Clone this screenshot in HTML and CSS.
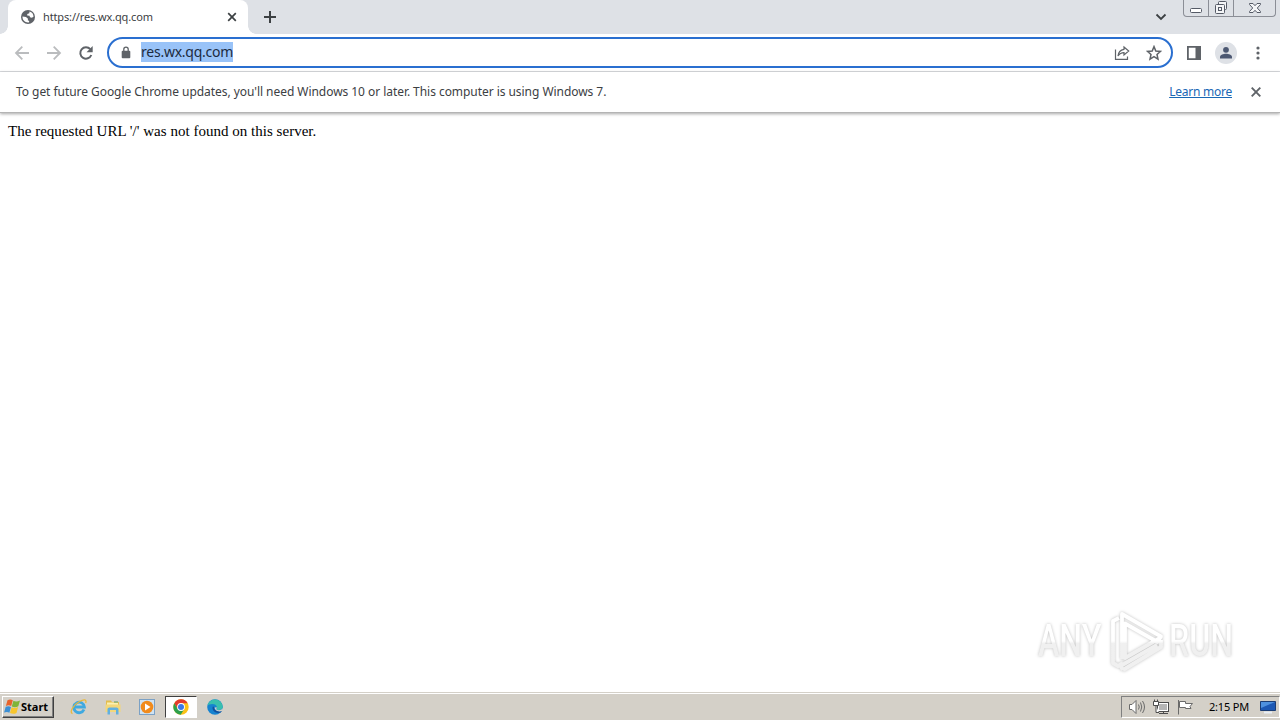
FILE: index.html
```html
<!DOCTYPE html>
<html lang="en">
<head>
  <meta charset="UTF-8">
  <meta name="viewport" content="width=device-width, initial-scale=1.0">
  <title>https://res.wx.qq.com</title>
  <link rel="stylesheet" href="styles.css">
</head>
<body>

  <!-- Tab strip -->
  <header class="tab-strip">
    <div class="tab-before"></div>
    <div class="tab">
      <svg class="globe" width="16" height="16" viewBox="0 0 16 16">
        <circle cx="8" cy="8" r="7" fill="#5f6368"/>
        <path d="M9.500 2.500C12 3 13.600 5.200 13.500 7.800L11.800 8.800 10 8.300 9.500 6.800 7.200 6.600 7.300 5 9.300 4.300zM2.500 7.500L6 8 8 9.800 7.800 11.200 9.300 12 8.800 13.400C5.500 13.800 2.300 11.500 2.500 7.500z" fill="#fff"/>
      </svg>
      <span class="tab-title">https://res.wx.qq.com</span>
      <svg class="tab-close" width="10" height="10" viewBox="0 0 10 10">
        <path d="M1.200 1.200L8.800 8.800M8.800 1.200L1.200 8.800" stroke="#3c4043" stroke-width="1.700"/>
      </svg>
    </div>
    <svg class="new-tab" width="14" height="14" viewBox="0 0 14 14">
      <path d="M7 1V13M1 7H13" stroke="#3c4043" stroke-width="2"/>
    </svg>
    <svg class="tab-search" width="12" height="8" viewBox="0 0 12 8">
      <path d="M1.500 1.500L6 6 10.500 1.500" fill="none" stroke="#3c4043" stroke-width="1.800"/>
    </svg>
    <div class="window-buttons">
      <span class="minimize">
        <svg width="14" height="14" viewBox="0 0 14 14"><rect x="1.500" y="7.500" width="11" height="4" rx="1" fill="#fff" stroke="#555a66"/></svg>
      </span>
      <span class="restore">
        <svg width="14" height="14" viewBox="0 0 14 14" fill="#f4f5f7" stroke="#555a66"><rect x="4.500" y="0.500" width="8" height="8" rx="1"/><rect x="1.500" y="3.500" width="9" height="9" rx="1"/><rect x="4.500" y="6.500" width="3" height="3"/></svg>
      </span>
      <span class="close">
        <svg width="14" height="14" viewBox="0 0 14 14"><path d="M1.500 2.500H5L7 4.700 9 2.500H12.500V3.500L9.300 7 12.500 10.500V11.500H9L7 9.300 5 11.500H1.500V10.500L4.700 7 1.500 3.500z" fill="#f4f5f7" stroke="#555a66"/></svg>
      </span>
    </div>
  </header>

  <!-- Toolbar -->
  <div class="toolbar">
    <svg class="nav back" width="16" height="16" viewBox="0 0 16 16"><path d="M15 8H2.500M8.300 1.700L2 8 8.300 14.300" fill="none" stroke="#babcbe" stroke-width="1.800"/></svg>
    <svg class="nav forward" width="16" height="16" viewBox="0 0 16 16"><path d="M1 8H13.500M7.700 1.700L14 8 7.700 14.300" fill="none" stroke="#babcbe" stroke-width="1.800"/></svg>
    <svg class="nav reload" width="16" height="16" viewBox="0 0 16 16"><path d="M13.300 10A5.700 5.700 0 1 1 12.300 4.200" fill="none" stroke="#5f6368" stroke-width="2"/><path d="M14.700 1V7.200H8.500z" fill="#5f6368"/></svg>
    <div class="omnibox">
      <svg class="lock" width="10" height="13" viewBox="0 0 10 13"><path d="M2.800 6V3.300A2.200 2.200 0 0 1 7.200 3.300V6" fill="none" stroke="#5f6368" stroke-width="1.300"/><rect x="0.700" y="4.700" width="8.600" height="7.500" rx="1" fill="#5f6368"/></svg>
      <span class="url">res.wx.qq.com</span>
      <svg class="share" width="16" height="16" viewBox="0 0 16 16" fill="none" stroke="#5f6368" stroke-width="1.200"><path d="M1.500 4.500V14.400H13.500V11.500"/><path d="M10 2L14.700 6 10 10V7.700C7.200 7.700 5.500 8.700 4 11 4.300 7.500 6.500 4.800 10 4.300z"/></svg>
      <svg class="star" width="16" height="16" viewBox="0 0 16 16"><path d="M8 1.600L9.800 6 14.500 6.400 11 9.500 12 14.100 8 11.700 4 14.100 5 9.500 1.500 6.400 6.200 6z" fill="none" stroke="#5f6368" stroke-width="1.500"/></svg>
    </div>
    <svg class="side-panel" width="14" height="14" viewBox="0 0 14 14"><path d="M0 0H14V14H0zM1.800 1.800V12.200H8.500V1.800z" fill="#5f6368" fill-rule="evenodd"/></svg>
    <svg class="profile" width="22" height="22" viewBox="0 0 22 22"><circle cx="11" cy="11" r="11" fill="#dee1e6"/><circle cx="11" cy="7.800" r="2.900" fill="#4c5872"/><path d="M5 16.500V15C5 12.900 8.500 11.800 11 11.800S17 12.900 17 15V16.500z" fill="#4c5872"/></svg>
    <svg class="menu" width="4" height="14" viewBox="0 0 4 14" fill="#5f6368"><circle cx="2" cy="2" r="1.600"/><circle cx="2" cy="7" r="1.600"/><circle cx="2" cy="12" r="1.600"/></svg>
  </div>

  <!-- Update notice -->
  <div class="infobar">
    <p>To get future Google Chrome updates, you'll need Windows 10 or later. This computer is using Windows 7.</p>
    <a href="#">Learn more</a>
    <svg width="10" height="10" viewBox="0 0 10 10"><path d="M0.700 0.700L9.300 9.300M9.300 0.700L0.700 9.300" stroke="#5f6368" stroke-width="1.900"/></svg>
  </div>

  <main class="page">
    <p>The requested URL '/' was not found on this server.</p>
    <div class="watermark">
      <span class="any">ANY</span>
      <svg width="58" height="64" viewBox="0 0 58 64" fill="none" stroke-linejoin="round">
        <defs>
          <linearGradient id="fade" gradientUnits="userSpaceOnUse" x1="0" y1="0" x2="0" y2="64">
            <stop offset="0.500" stop-color="#fff"/>
            <stop offset="0.540" stop-color="#f0f0f0"/>
          </linearGradient>
        </defs>
        <path d="M12 9L6 12V54L11 57L16 54M15 50V5L54 27.500L50.500 33L18 14.500V49L53 29M16 61L54 38V31M16 61L13.500 57L50 36" stroke="url(#fade)" stroke-width="3.800"/>
      </svg>
      <span class="run">RUN</span>
    </div>
  </main>

  <!-- Taskbar -->
  <footer class="taskbar">
    <div class="start">
      <svg width="17" height="16" viewBox="0 0 17 16">
        <path d="M3.500 1.200C5.500 0 7.300 0.300 8.800 1.300L7.200 7.100C5.700 6.100 3.900 6 1.900 7z" fill="#e8632b"/>
        <path d="M9.400 1.700C11.200 2.700 13.400 2.700 16 1.500L14.300 7.300C12 8.500 9.700 8.400 7.800 7.400z" fill="#7fb438"/>
        <path d="M1.700 7.800C3.600 6.800 5.500 7 7 7.900L5.400 13.700C3.900 12.700 2 12.600 0.100 13.600z" fill="#3c8fd4"/>
        <path d="M7.600 8.300C9.500 9.200 11.700 9.300 14.100 8.100L12.500 14C10.200 15.200 8 15 6 14z" fill="#f7c52d"/>
      </svg>
      <span>Start</span>
    </div>
    <div class="quick-launch">
      <span class="app">
        <svg width="18" height="18" viewBox="0 0 18 18" fill="none"><path d="M14 11.500A5.300 5.300 0 1 1 14.400 9H5" stroke="#3fa9e0" stroke-width="2.800"/><path d="M2.500 15.700C-1 14.500 3 7 9.500 3.500 14 1 17 1.300 15.700 5" stroke="#e9b83b" stroke-width="1.300"/></svg>
      </span>
      <span class="app">
        <svg width="18" height="18" viewBox="0 0 18 18"><path d="M2 2.500H7L8 4H15V13H2z" fill="#e3bd4e"/><path d="M3 4.500H14V12H3z" fill="#fbf0b0"/><path d="M1.500 6.500H16.500V14H1.500z" fill="#f3d77a"/><path d="M3.500 16.500V11Q3.500 9.500 5.500 9.500H12.500Q14.500 9.500 14.500 11V16.500H12V12H6V16.500z" fill="#62b0df"/><path d="M10 4H14" stroke="#5d9b64"/></svg>
      </span>
      <span class="app">
        <svg width="18" height="18" viewBox="0 0 18 18"><rect x="1.500" y="1.500" width="15" height="15" fill="#cfe3f3" stroke="#7ba1c5"/><circle cx="9" cy="9" r="6.300" fill="#f18b1c"/><path d="M7 5.500L12.500 9 7 12.500z" fill="#fff"/></svg>
      </span>
      <span class="app active">
        <svg width="16" height="16" viewBox="0 0 16 16"><circle cx="8" cy="8" r="7.700" fill="#fbc116"/><path d="M1.300 4.200A7.700 7.700 0 0 1 14.700 4.200H8L4.700 10z" fill="#e33b2e"/><path d="M1.300 4.200A7.700 7.700 0 0 0 7.700 15.700L11.300 10H4.700z" fill="#2da04c"/><circle cx="8" cy="8" r="3.900" fill="#fff"/><circle cx="8" cy="8" r="3" fill="#3b78e7"/></svg>
      </span>
      <span class="app">
        <svg width="18" height="18" viewBox="0 0 18 18"><circle cx="9" cy="9" r="7.800" fill="#1683d0"/><path d="M1.400 7.500A7.800 7.800 0 0 1 16.800 9C16.600 12 12.500 12.700 10.500 11.500 12 9.500 10.300 6 6.500 6 4 6 2 7 1.400 7.500z" fill="#39bfae"/><path d="M7 8.200C5.500 10.500 7.500 15 12.700 15 14 15 15.300 14 15.900 13 12 14.300 8 12.500 8.200 9.500z" fill="#124f9d"/><path d="M10.500 11.500C12.500 13 16 12 16.800 10V12.500L15.900 13C12 14.300 8.500 12 8.700 9.500L10.700 9.300C10.900 10.300 10.200 11 10.500 11.500z" fill="#d4d0c8"/></svg>
      </span>
    </div>
    <div class="tray">
      <svg width="18" height="16" viewBox="0 0 18 16" fill="none" stroke="#6a6a6a"><path d="M1.500 5.500H4L8 1.500V14.500L4 10.500H1.500z" fill="#fff"/><path d="M10.500 5.500Q12 8 10.500 10.500M12.500 3.500Q15 8 12.500 12.500M14.500 2Q18.500 8 14.500 14"/></svg>
      <svg width="17" height="16" viewBox="0 0 17 16" fill="#fff" stroke="#4c4c4c"><rect x="4.500" y="3.500" width="11" height="9"/><path d="M6 5H14V11H6z" fill="#b5b5b5" stroke="none"/><path d="M6 14.500H15M10.500 12.500V14.500"/><path d="M0.500 2.500H5.500V6.500H0.500zM1.500 0.500V2.500M4.500 0.500V2.500M3 6.500V13.500H6"/></svg>
      <svg width="17" height="16" viewBox="0 0 17 16" fill="#fff" stroke="#6a6a6a"><path d="M1.500 1V15.500"/><path d="M2.500 2.500H8.500V4.500H15.500L13 7.500 14 9.500H8.500V8.500H2.500z"/></svg>
      <span class="clock">2:15 PM</span>
      <svg class="desktop" width="16" height="14" viewBox="0 0 16 14"><path d="M0.500 1.500H15.500V10.500H0.500z" fill="#1c58b4" stroke="#1b3d74"/><path d="M1 2H15L1 8z" fill="#4e91df"/><path d="M4 12.500H12" stroke="#e8eef5" stroke-width="2"/></svg>
    </div>
  </footer>

</body>
</html>
```
FILE: styles.css
```css
* {
  margin: 0;
  padding: 0;
  box-sizing: border-box;
}

body {
  width: 1280px;
  height: 720px;
  overflow: hidden;
  display: flex;
  flex-direction: column;
  background-color: #fff;
  font-family: "Noto Sans", sans-serif;
  color: #3c4043;
}

svg {
  display: block;
  flex-shrink: 0;
}

span,
p,
a {
  white-space: nowrap;
}

/* Tab strip */
.tab-strip {
  display: flex;
  height: 34px;
  background-color: #dee1e6;
}

.tab-before {
  width: 8px;
  background: radial-gradient(circle at 0 26px, #dee1e6 7.5px, #fff 8px);
  clip-path: inset(26px 0 0 0);
}

.tab {
  position: relative;
  display: flex;
  align-items: center;
  width: 240px;
  padding: 0 11px 0 12px;
  background-color: #fff;
  border-radius: 8px 8px 0 0;
}

.tab::after {
  content: "";
  position: absolute;
  left: 100%;
  bottom: 0;
  width: 8px;
  height: 8px;
  background: radial-gradient(circle at 8px 0, #dee1e6 7.5px, #fff 8px);
}

.tab-title {
  flex: 1;
  margin-left: 7px;
  padding-bottom: 2px;
  font-size: 11px;
  letter-spacing: -0.14px;
}

.new-tab {
  margin: 10px 0 0 15px;
}

.tab-search {
  margin: 13px 16px 0 auto;
}

.window-buttons {
  display: flex;
  width: 93px;
  height: 17px;
  margin-right: 4px;
  border: 1px solid #8b8e96;
  border-top: none;
  border-radius: 0 0 4px 4px;
}

.window-buttons span {
  display: flex;
  justify-content: center;
  align-items: center;
}

.minimize,
.restore {
  width: 25px;
  border-right: 1px solid #8b8e96;
}

.close {
  flex: 1;
}

/* Toolbar */
.toolbar {
  display: flex;
  align-items: center;
  height: 38px;
  padding: 0 20px 0 14px;
  border-bottom: 1px solid #dadce0;
}

.nav {
  margin-right: 16px;
}

.reload {
  margin-right: 13px;
}

.omnibox {
  display: flex;
  align-items: center;
  width: 1066px;
  height: 31px;
  padding: 0 9px 0 12px;
  border: 2px solid #2a6fd0;
  border-radius: 16px;
}

.url {
  height: 20px;
  margin: 0 0 1px 10px;
  line-height: 20px;
  font-size: 14px;
  letter-spacing: -0.24px;
  color: #1c2b40;
  background-color: #99c3f8;
}

.share {
  margin: 0 16px 0 auto;
}

.side-panel {
  margin-left: 14px;
}

.profile {
  margin-left: 14px;
}

.menu {
  margin-left: auto;
}

/* Update notice */
.infobar {
  position: relative;
  display: flex;
  align-items: center;
  height: 41px;
  padding: 0 19px 0 16px;
  border-bottom: 1px solid #b4b4b4;
  box-shadow: 0 1px 3px rgba(0, 0, 0, 0.35);
  font-size: 12px;
}

.infobar p {
  padding-bottom: 2px;
  letter-spacing: -0.05px;
}

.infobar a {
  margin: 0 19px 0 auto;
  padding-bottom: 2px;
  letter-spacing: -0.24px;
  color: #1967b5;
}

/* Page */
.page {
  position: relative;
  flex: 1;
  padding: 9px 8px;
  font-family: "Liberation Serif", serif;
  font-size: 15px;
  line-height: 18px;
  letter-spacing: 0.02px;
  color: #000;
}

.watermark {
  position: absolute;
  left: 1038px;
  top: 496px;
  display: flex;
  align-items: center;
  font-family: Roboto, sans-serif;
  font-size: 44px;
  font-weight: 500;
  line-height: 64px;
  filter: drop-shadow(0 0 1.5px rgba(0, 0, 0, 0.25));
}

.watermark span {
  width: 64px;
  transform: scaleX(0.73);
  transform-origin: left;
}

.any,
.run {
  padding-right: 30px;
  margin-right: -30px;
  box-sizing: content-box;
  background: linear-gradient(#fff 50%, #f0f0f0 54%);
  -webkit-background-clip: text;
  background-clip: text;
  color: transparent;
}

.watermark svg {
  margin: 0 4px 0 5px;
}

/* Taskbar */
.taskbar {
  display: flex;
  align-items: center;
  height: 28px;
  padding: 2px 0 2px 2px;
  border-top: 1px solid #d4d0c8;
  box-shadow: inset 0 1px #fff;
  background-color: #d4d0c8;
  font-size: 11px;
  color: #000;
}

.start {
  display: flex;
  align-items: center;
  width: 52px;
  height: 22px;
  padding-left: 1px;
  border: 1px solid #404040;
  border-top-color: #fff;
  border-left-color: #fff;
  box-shadow: inset -1px -1px #808080;
  font-weight: bold;
}

.quick-launch {
  display: flex;
  margin-left: 9px;
}

.app {
  display: flex;
  justify-content: center;
  align-items: center;
  width: 32px;
  height: 22px;
  margin-right: 2px;
}

.active {
  background-color: #fff;
  border: 1px solid #fff;
  border-top-color: #404040;
  border-left-color: #404040;
}

.tray {
  display: flex;
  align-items: center;
  width: 159px;
  height: 22px;
  margin-left: auto;
  padding: 0 3px 0 6px;
  border: 1px solid #fff;
  border-top-color: #808080;
  border-left-color: #808080;
}

.tray svg {
  margin-right: 7px;
}

.clock {
  margin-left: 8px;
  letter-spacing: -0.2px;
}

.tray .desktop {
  margin: 0 0 0 auto;
}
```
